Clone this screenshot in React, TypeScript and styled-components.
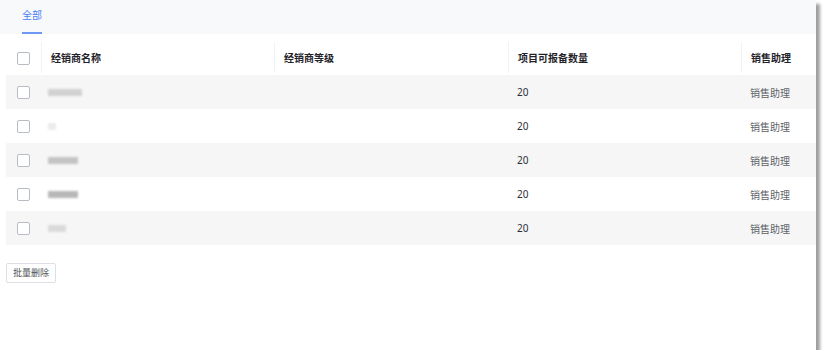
import React from 'react'
import styled, { createGlobalStyle } from 'styled-components'

const GlobalStyle = createGlobalStyle`
  html, body {
    margin: 0;
    background: #fff;
    font-family: "Noto Sans", "Noto Sans CJK SC", sans-serif;
  }
`

const Frame = styled.div`
  width: 816px;
  height: 350px;
  background: #fff;
  box-shadow: 4px 4px 3px rgba(0, 0, 0, 0.38);
  overflow: hidden;
`

const TabBar = styled.div`
  height: 34px;
  background: #f8f9fb;
  padding-left: 22px;
  display: flex;
  align-items: stretch;
`

const Tab = styled.div<{ $active?: boolean }>`
  display: flex;
  align-items: center;
  padding-bottom: 4px;
  font-size: 10px;
  color: ${p => (p.$active ? '#4a7ff5' : '#646a73')};
  border-bottom: 2px solid ${p => (p.$active ? '#6f98f5' : 'transparent')};
  box-sizing: border-box;
`

const Table = styled.div`
  margin: 8px 0 0 6px;
`

const Row = styled.div<{ $striped?: boolean }>`
  display: grid;
  grid-template-columns: 35px 233px 234px 233px 1fr;
  height: 34px;
  background: ${p => (p.$striped ? '#f6f6f7' : '#fff')};
`

const HeadRow = styled(Row)`
  height: 33px;
`

const Cell = styled.div<{ $muted?: boolean }>`
  display: flex;
  align-items: center;
  padding-left: 9px;
  font-size: 10px;
  color: ${p => (p.$muted ? '#5f6368' : '#2b2f36')};
`

const HeadCell = styled(Cell)<{ $divider?: boolean }>`
  font-weight: 600;
  color: #1f2329;
  border-left: 1px solid ${p => (p.$divider ? '#f1f2f4' : 'transparent')};
  margin: 0 0 2px;
`

const CheckCell = styled.div`
  display: flex;
  align-items: center;
  padding-left: 11px;
`

const Checkbox = styled.span`
  width: 11px;
  height: 11px;
  border: 1px solid #b8bcc3;
  border-radius: 2px;
  background: #fff;
`

const Blur = styled.span<{ $w: number; $tone: string }>`
  display: inline-block;
  width: ${p => p.$w}px;
  height: 7px;
  background: ${p => p.$tone};
  filter: blur(1.2px);
  margin-left: -2px;
`

const Footer = styled.div`
  padding: 14px 0 0 6px;
`

const Button = styled.button`
  height: 20px;
  padding: 0 6px;
  border: 1px solid #dcdfe6;
  border-radius: 2px;
  background: #fff;
  font-family: "Noto Sans CJK SC", sans-serif;
  font-size: 9px;
  color: #4e5358;
`

const rows = [
  { blur: 34, tone: '#d2d2d2' },
  { blur: 8, tone: '#ececec' },
  { blur: 30, tone: '#c4c4c4' },
  { blur: 30, tone: '#b8b8b8' },
  { blur: 18, tone: '#dadada' },
]

export default function App() {
  return (
    <>
      <GlobalStyle />
      <Frame>
        <TabBar>
          <Tab $active>全部</Tab>
        </TabBar>
        <Table>
          <HeadRow>
            <CheckCell>
              <Checkbox />
            </CheckCell>
            <HeadCell $divider>经销商名称</HeadCell>
            <HeadCell $divider>经销商等级</HeadCell>
            <HeadCell $divider>项目可报备数量</HeadCell>
            <HeadCell $divider>销售助理</HeadCell>
          </HeadRow>
          {rows.map((r, i) => (
            <Row key={i} $striped={i % 2 === 0}>
              <CheckCell>
                <Checkbox />
              </CheckCell>
              <Cell>
                <Blur $w={r.blur} $tone={r.tone} />
              </Cell>
              <Cell />
              <Cell>20</Cell>
              <Cell $muted>销售助理</Cell>
            </Row>
          ))}
        </Table>
        <Footer>
          <Button>批量删除</Button>
        </Footer>
      </Frame>
    </>
  )
}
